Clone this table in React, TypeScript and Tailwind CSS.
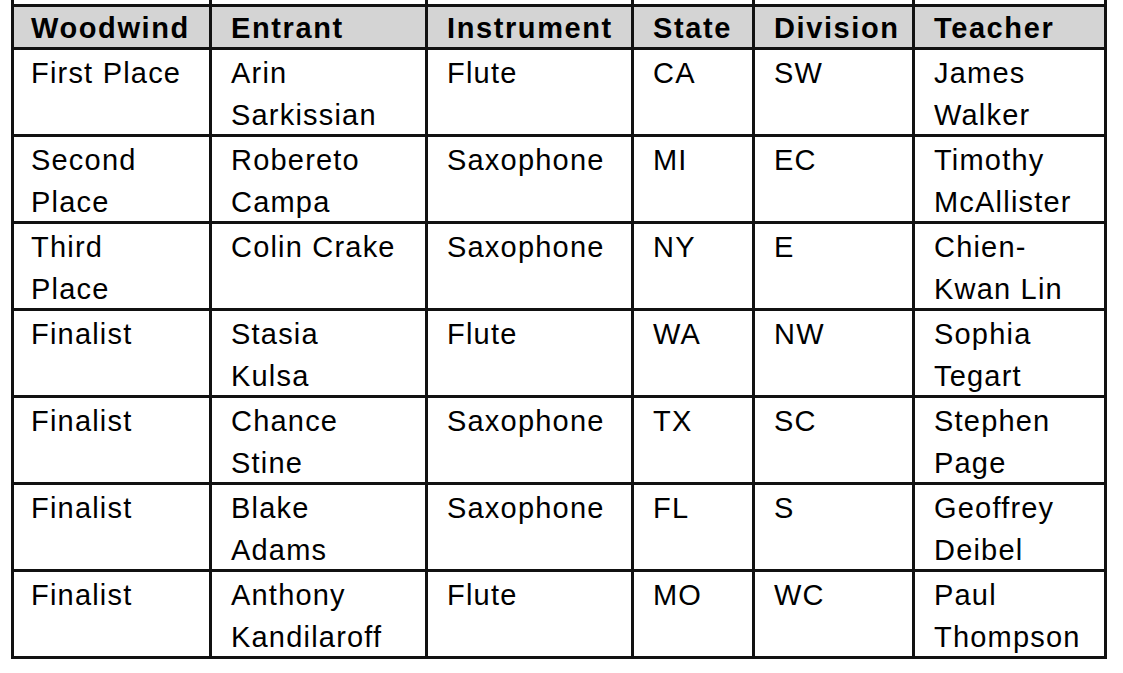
const header = ['Woodwind', 'Entrant', 'Instrument', 'State', 'Division', 'Teacher'];

const rows: string[][][] = [
  [['First Place'], ['Arin', 'Sarkissian'], ['Flute'], ['CA'], ['SW'], ['James', 'Walker']],
  [['Second', 'Place'], ['Robereto', 'Campa'], ['Saxophone'], ['MI'], ['EC'], ['Timothy', 'McAllister']],
  [['Third', 'Place'], ['Colin Crake'], ['Saxophone'], ['NY'], ['E'], ['Chien-', 'Kwan Lin']],
  [['Finalist'], ['Stasia', 'Kulsa'], ['Flute'], ['WA'], ['NW'], ['Sophia', 'Tegart']],
  [['Finalist'], ['Chance', 'Stine'], ['Saxophone'], ['TX'], ['SC'], ['Stephen', 'Page']],
  [['Finalist'], ['Blake', 'Adams'], ['Saxophone'], ['FL'], ['S'], ['Geoffrey', 'Deibel']],
  [['Finalist'], ['Anthony', 'Kandilaroff'], ['Flute'], ['MO'], ['WC'], ['Paul', 'Thompson']],
];

export default function App() {
  return (
    <div
      className="w-[1123px] h-[673px] bg-white text-black overflow-hidden"
      style={{ fontFamily: '"Liberation Sans", Arial, sans-serif' }}
    >
      <div className="ml-[11px] w-[1096px] border-l-[3px] border-[#111] grid grid-cols-[198px_216px_206px_121px_160px_192px]">
        {header.map((h) => (
          <div key={'top-' + h} className="h-[4px] border-r-[3px] border-[#111]" />
        ))}
        {header.map((h, j) => (
          <div
            key={h}
            className={
              'h-[46px] bg-[#d4d4d4] border-t-[3px] border-r-[3px] border-b-[3px] border-[#111] pt-[1px] text-[29px] leading-[40px] font-bold tracking-[1.6px] whitespace-nowrap ' +
              (j === 0 ? 'pl-[17px]' : 'pl-[19px]')
            }
          >
            {h}
          </div>
        ))}
        {rows.map((row, i) =>
          row.map((cell, j) => (
            <div
              key={i + '-' + j}
              className={
                'h-[87px] border-r-[3px] border-b-[3px] border-[#111] pt-[2px] text-[29px] leading-[42px] tracking-[1.2px] whitespace-nowrap overflow-hidden ' +
                (j === 0 ? 'pl-[17px]' : 'pl-[19px]')
              }
            >
              {cell.map((line, k) => (
                <div key={k}>{line}</div>
              ))}
            </div>
          ))
        )}
      </div>
    </div>
  );
}
